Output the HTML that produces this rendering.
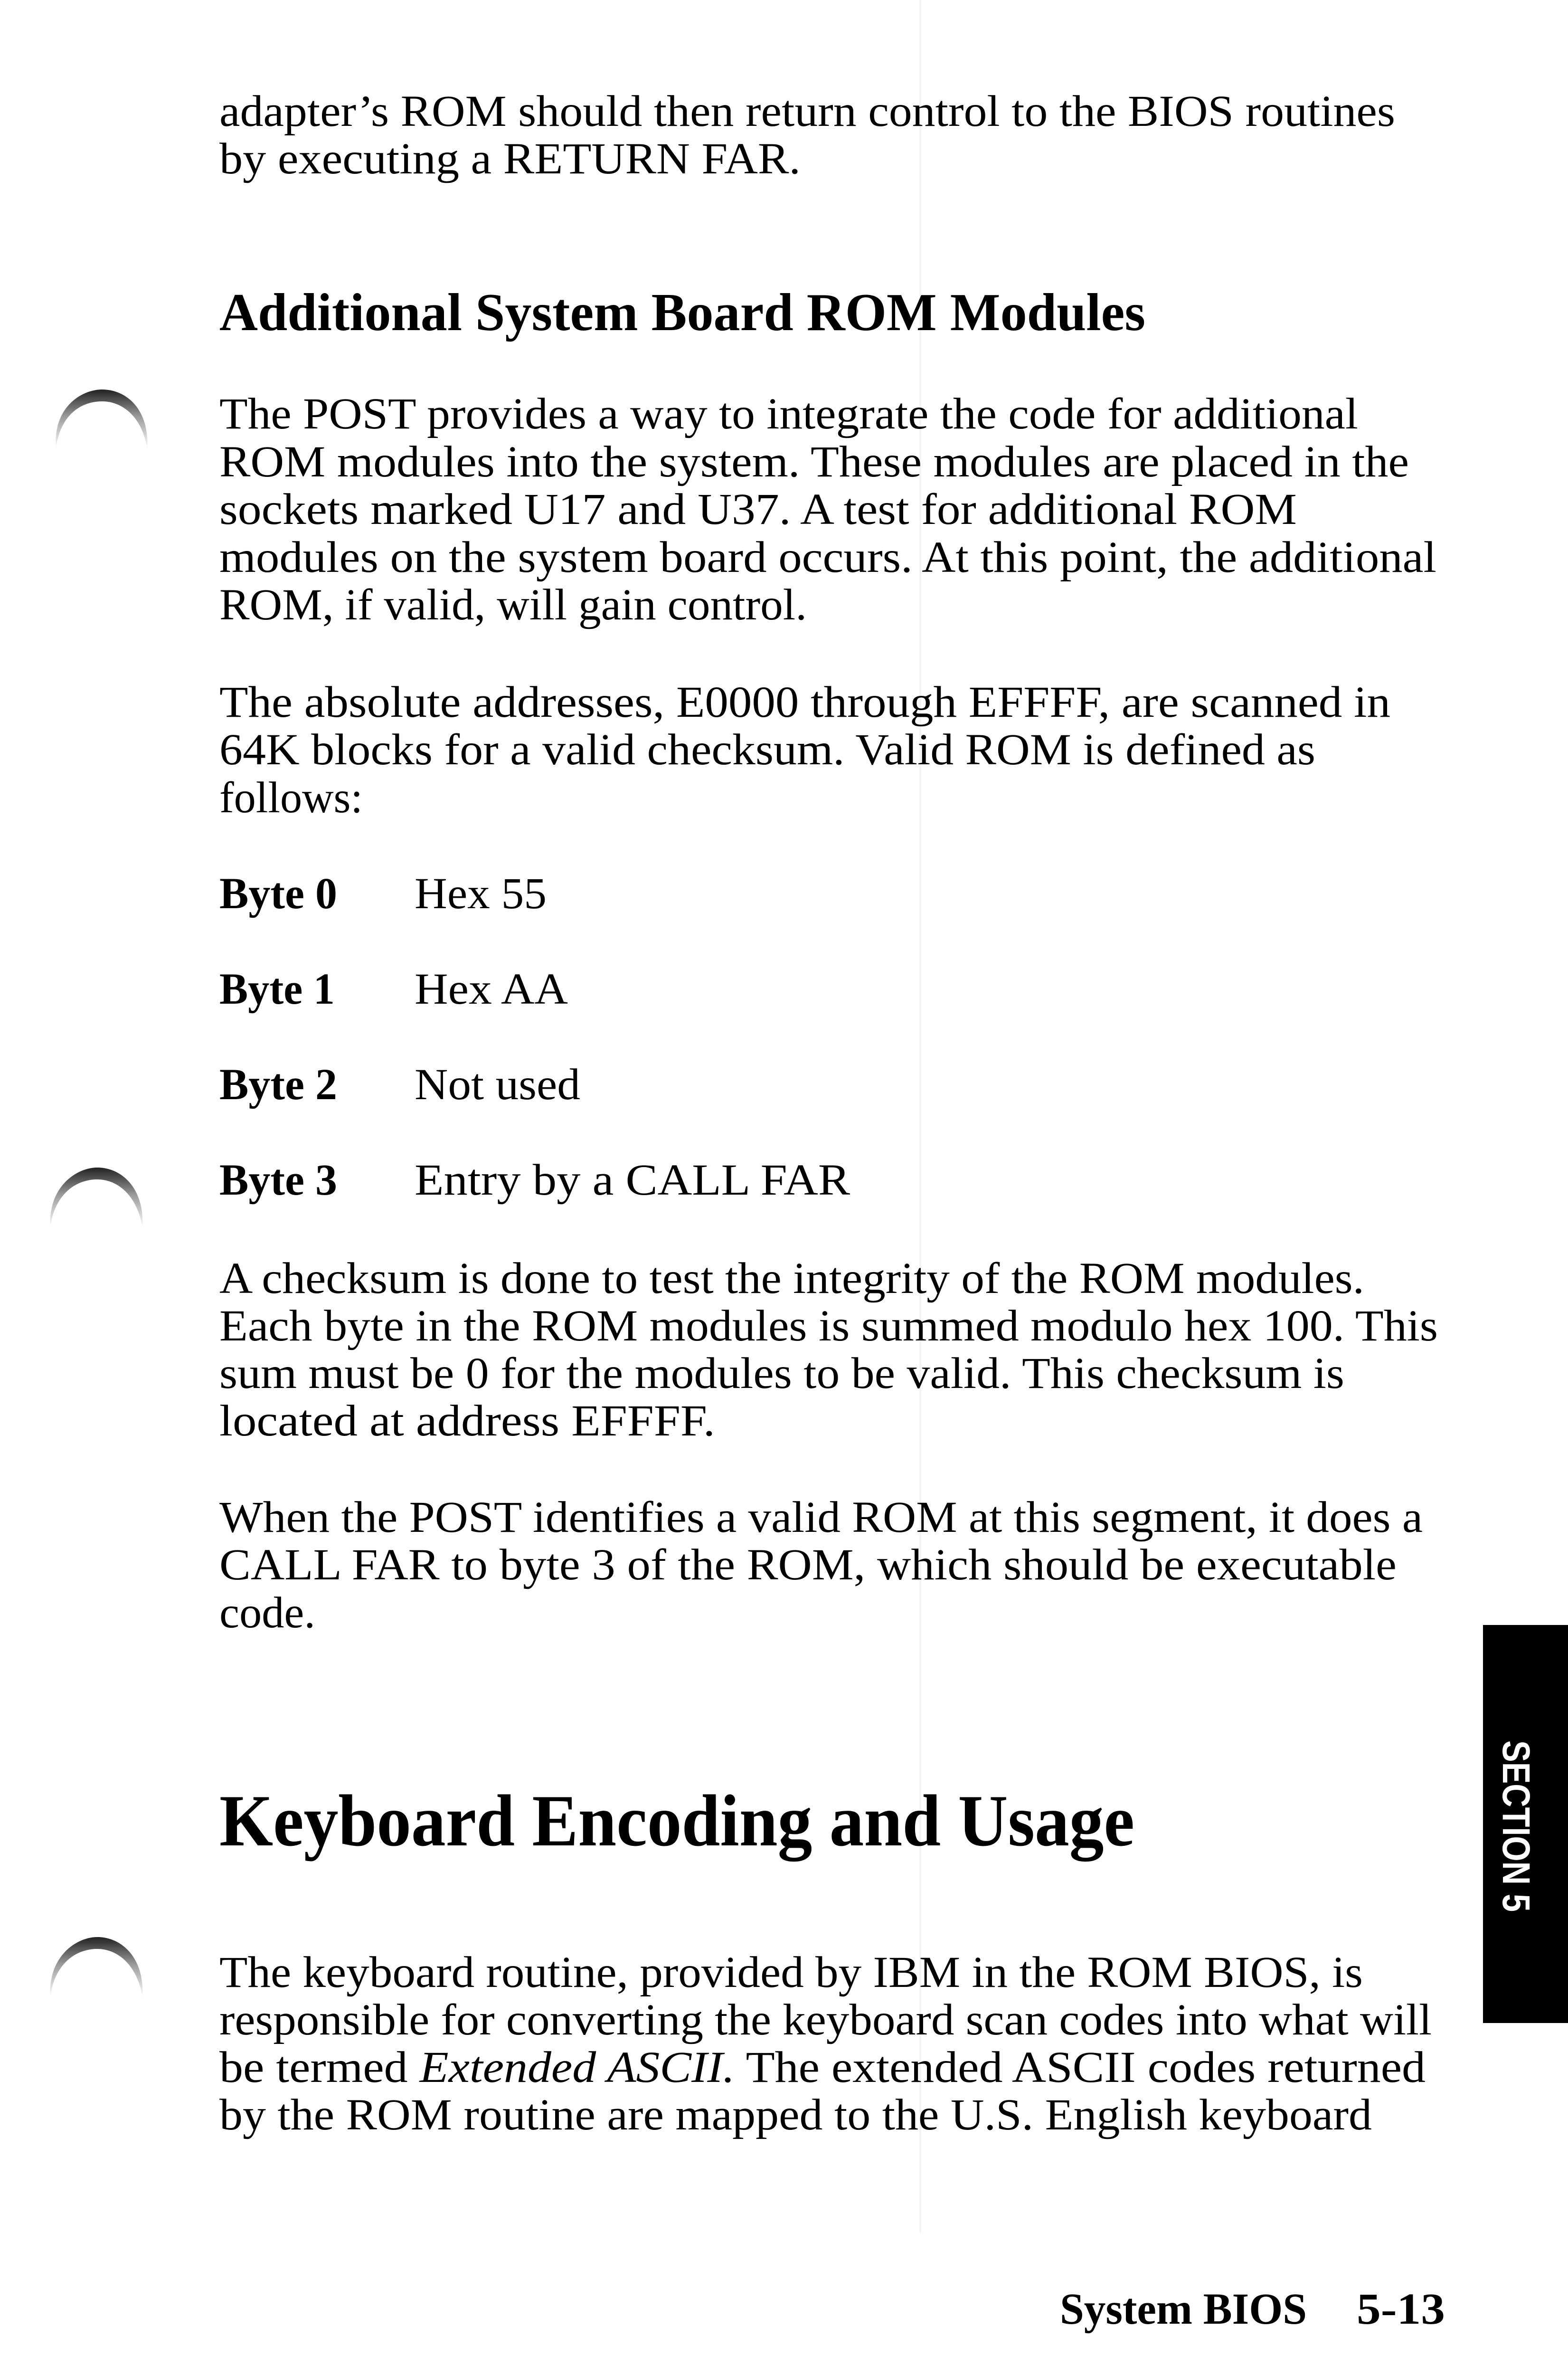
<!DOCTYPE html>
<html><head><meta charset="utf-8"><style>
html,body{margin:0;padding:0;background:#fff;width:3302px;height:5080px;overflow:hidden}
svg{display:block}
text{font-family:"Liberation Serif",serif;fill:#000}
.b{font-size:93px}
.h{font-size:112px;font-weight:bold}
.H{font-size:155px;font-weight:bold}
.bb{font-size:93px;font-weight:bold}
</style></head><body>
<svg width="3302" height="5080" viewBox="0 0 3302 5080" xmlns="http://www.w3.org/2000/svg">
<rect width="3302" height="5080" fill="#fff"/>
<line x1="1938" y1="0" x2="1938" y2="4700" stroke="#f2f2f2" stroke-width="3"/>
<defs>
<linearGradient id="g" x1="0" y1="0" x2="0" y2="1">
<stop offset="0" stop-color="#222"/><stop offset="0.45" stop-color="#999"/><stop offset="1" stop-color="#fff"/>
</linearGradient>
</defs>
<g fill="url(#g)">
<path d="M118 945 C110 860 170 820 215 820 C265 820 315 860 310 945 C300 880 260 845 215 845 C165 845 125 880 118 945Z"/>
<path d="M106 2585 C100 2500 160 2458 205 2458 C255 2458 305 2500 300 2585 C290 2520 250 2483 205 2483 C155 2483 113 2520 106 2585Z"/>
<path d="M106 4205 C100 4120 160 4078 205 4078 C255 4078 305 4120 300 4205 C290 4140 250 4103 205 4103 C155 4103 113 4140 106 4205Z"/>
</g>

<text class="b" x="462" y="265" textLength="2476" lengthAdjust="spacingAndGlyphs">adapter’s ROM should then return control to the BIOS routines</text>
<text class="b" x="462" y="365" textLength="1224" lengthAdjust="spacingAndGlyphs">by executing a RETURN FAR.</text>

<text class="h" x="462" y="695" textLength="1950" lengthAdjust="spacingAndGlyphs">Additional System Board ROM Modules</text>

<text class="b" x="462" y="902" textLength="2398" lengthAdjust="spacingAndGlyphs">The POST provides a way to integrate the code for additional</text>
<text class="b" x="462" y="1003" textLength="2505" lengthAdjust="spacingAndGlyphs">ROM modules into the system.  These modules are placed in the</text>
<text class="b" x="462" y="1103" textLength="2269" lengthAdjust="spacingAndGlyphs">sockets marked U17 and U37.  A test for additional ROM</text>
<text class="b" x="462" y="1204" textLength="2563" lengthAdjust="spacingAndGlyphs">modules on the system board occurs.  At this point, the additional</text>
<text class="b" x="462" y="1304" textLength="1237" lengthAdjust="spacingAndGlyphs">ROM, if valid, will gain control.</text>

<text class="b" x="462" y="1509" textLength="2466" lengthAdjust="spacingAndGlyphs">The absolute addresses, E0000 through EFFFF, are scanned in</text>
<text class="b" x="462" y="1609" textLength="2308" lengthAdjust="spacingAndGlyphs">64K blocks for a valid checksum.  Valid ROM is defined as</text>
<text class="b" x="462" y="1710" textLength="302" lengthAdjust="spacingAndGlyphs">follows:</text>

<text class="bb" x="462" y="1912" textLength="248" lengthAdjust="spacingAndGlyphs">Byte 0</text>
<text class="b" x="873" y="1912" textLength="278" lengthAdjust="spacingAndGlyphs">Hex 55</text>
<text class="bb" x="462" y="2113" textLength="243" lengthAdjust="spacingAndGlyphs">Byte 1</text>
<text class="b" x="873" y="2113" textLength="323" lengthAdjust="spacingAndGlyphs">Hex AA</text>
<text class="bb" x="462" y="2314" textLength="248" lengthAdjust="spacingAndGlyphs">Byte 2</text>
<text class="b" x="873" y="2314" textLength="349" lengthAdjust="spacingAndGlyphs">Not used</text>
<text class="bb" x="462" y="2515" textLength="248" lengthAdjust="spacingAndGlyphs">Byte 3</text>
<text class="b" x="873" y="2515" textLength="917" lengthAdjust="spacingAndGlyphs">Entry by a CALL FAR</text>

<text class="b" x="462" y="2722" textLength="2411" lengthAdjust="spacingAndGlyphs">A checksum is done to test the integrity of the ROM modules.</text>
<text class="b" x="462" y="2822" textLength="2566" lengthAdjust="spacingAndGlyphs">Each byte in the ROM modules is summed modulo hex 100.  This</text>
<text class="b" x="462" y="2922" textLength="2369" lengthAdjust="spacingAndGlyphs">sum must be 0 for the modules to be valid.  This checksum is</text>
<text class="b" x="462" y="3022" textLength="1044" lengthAdjust="spacingAndGlyphs">located at address EFFFF.</text>

<text class="b" x="462" y="3225" textLength="2534" lengthAdjust="spacingAndGlyphs">When the POST identifies a valid ROM at this segment, it does a</text>
<text class="b" x="462" y="3325" textLength="2479" lengthAdjust="spacingAndGlyphs">CALL FAR to byte 3 of the ROM, which should be executable</text>
<text class="b" x="462" y="3426" textLength="202" lengthAdjust="spacingAndGlyphs">code.</text>

<text class="H" x="462" y="3885" textLength="1927" lengthAdjust="spacingAndGlyphs">Keyboard Encoding and Usage</text>

<text class="b" x="462" y="4183" textLength="2408" lengthAdjust="spacingAndGlyphs">The keyboard routine, provided by IBM in the ROM BIOS, is</text>
<text class="b" x="462" y="4283" textLength="2553" lengthAdjust="spacingAndGlyphs">responsible for converting the keyboard scan codes into what will</text>
<text class="b" x="462" y="4383" textLength="2540" lengthAdjust="spacingAndGlyphs">be termed <tspan font-style="italic">Extended ASCII.</tspan>  The extended ASCII codes returned</text>
<text class="b" x="462" y="4483" textLength="2427" lengthAdjust="spacingAndGlyphs">by the ROM routine are mapped to the U.S. English keyboard</text>

<text class="bb" x="2232" y="4892" textLength="520" lengthAdjust="spacingAndGlyphs">System BIOS</text>
<text class="bb" x="2857" y="4892" textLength="186" lengthAdjust="spacingAndGlyphs">5-13</text>

<rect x="3123" y="3421" width="179" height="838" fill="#000"/>
<text x="3664" y="-3165" transform="rotate(90)" style="font-family:'Liberation Sans',sans-serif;font-weight:bold;font-size:82px;fill:#fff" textLength="361" lengthAdjust="spacingAndGlyphs">SECTION 5</text>
</svg>
</body></html>
